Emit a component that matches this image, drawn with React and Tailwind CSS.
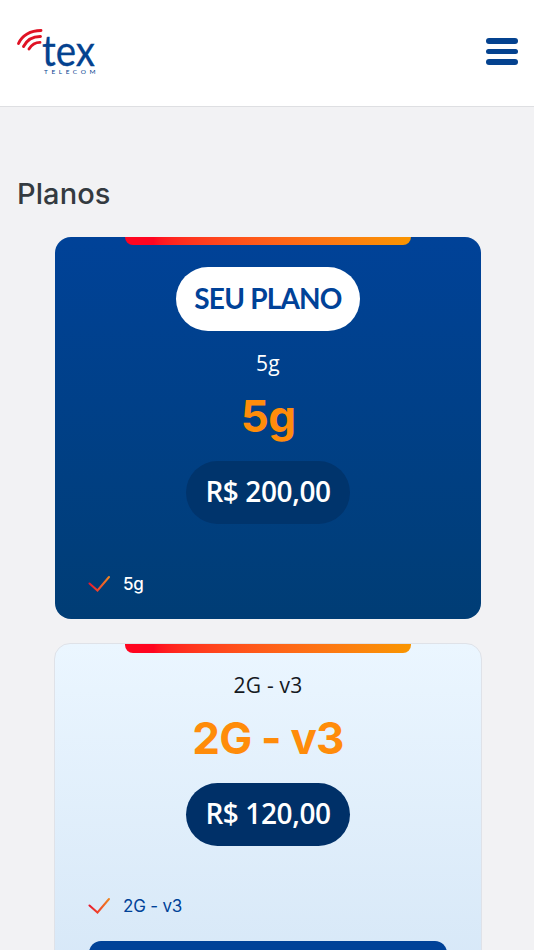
import { clsx } from "clsx";

const plans = [
  { name: "5g", price: "R$ 200,00", features: ["5g"], current: true },
  { name: "2G - v3", price: "R$ 120,00", features: ["2G - v3"], current: false },
];

const Logo = () => (
  <svg width="84" height="50" viewBox="0 0 84 50" role="img" aria-label="Tex Telecom" className="overflow-visible">
    <g fill="none" stroke="#e01224" strokeWidth="2.9" strokeLinecap="round">
      <path d="M2.500 15.500C6 7.500 14.500 2.500 25 2.500" />
      <path d="M7.500 18.500C11 11.800 17 8.400 24.500 8.500" />
      <path d="M13 21C15.500 17 19.500 14.400 24 14.400" />
    </g>
    <text
      x="26"
      y="37.500"
      textLength="53"
      lengthAdjust="spacingAndGlyphs"
      fill="#04428f"
      stroke="#04428f"
      strokeWidth="0.3"
      className="font-['Lato',sans-serif] text-[43px]"
    >
      tex
    </text>
    <text x="28" y="46" textLength="51.500" fill="#04428f" className="font-['Lato',sans-serif] text-[6.500px]">
      TELECOM
    </text>
  </svg>
);

const Header = () => (
  <header className="flex h-[107px] items-center justify-between border-b border-[#dedfe2] bg-white pr-4 pl-4">
    <Logo />
    <button type="button" aria-label="Menu" className="mb-[3px] flex w-8 flex-col gap-[5px]">
      <span className="h-[5.500px] rounded-full bg-[#04428f]" />
      <span className="h-[5.500px] rounded-full bg-[#04428f]" />
      <span className="h-[5.500px] rounded-full bg-[#04428f]" />
    </button>
  </header>
);

const CheckIcon = ({ id }) => (
  <svg width="22" height="18" viewBox="0 0 22 18" fill="none" className="shrink-0">
    <defs>
      <linearGradient id={id} x1="0" y1="0" x2="22" y2="0" gradientUnits="userSpaceOnUse">
        <stop stopColor="#e8112d" />
        <stop offset="0.5" stopColor="#f04a2a" />
        <stop offset="1" stopColor="#ee8a20" />
      </linearGradient>
    </defs>
    <path d="M1.500 8.500L9.500 15.500L21 2" stroke={`url(#${id})`} strokeWidth="2" strokeLinecap="round" />
  </svg>
);

const PlanCard = ({ plan, index }) => (
  <article
    className={clsx(
      "mx-auto flex flex-col items-center overflow-hidden rounded-2xl",
      plan.current
        ? "h-[382px] w-[426px] bg-linear-to-b from-[#004298] to-[#003d75]"
        : "h-[390px] w-[428px] border border-[#dfe2e8] bg-linear-to-b from-[#ebf6ff] to-[#d3e5f6]"
    )}
  >
    <div
      className={clsx(
        "w-[286px] shrink-0 rounded-b-lg bg-linear-to-r from-[#ff0520] from-10% to-[#f99500]",
        plan.current ? "h-2" : "h-[9px]"
      )}
    />
    {plan.current && (
      <div className="mt-[22px] flex h-16 w-[184px] shrink-0 items-center justify-center rounded-full bg-white pb-0.5 font-['Lato',sans-serif] text-[28px] font-bold tracking-[-0.8px] whitespace-nowrap text-[#004298]">
        SEU PLANO
      </div>
    )}
    <p
      className={clsx(
        "mt-[18px] h-7 shrink-0 font-['Open_Sans',sans-serif] text-[21px] leading-7 tracking-[0.2px]",
        plan.current ? "text-white" : "text-[#15191e]"
      )}
    >
      {plan.name}
    </p>
    <h2 className="mt-1.5 h-[66px] shrink-0 font-['Inter',sans-serif] text-[44px] leading-[66px] font-bold tracking-[-0.8px] whitespace-nowrap text-[#ff8c0a]">
      {plan.name}
    </h2>
    <div
      className={clsx(
        "mt-3 flex h-[63px] w-[164px] shrink-0 items-center justify-center rounded-full pb-1 font-['Open_Sans',sans-serif] text-[28px] font-semibold tracking-[-0.4px] whitespace-nowrap text-white",
        plan.current ? "bg-[#00346c]" : "bg-[#003068]"
      )}
    >
      {plan.price}
    </div>
    <ul
      className={clsx(
        "mt-12 w-full shrink-0 pl-[33px] font-['Inter',sans-serif] text-[17px] leading-6 tracking-[-0.2px]",
        plan.current ? "font-medium text-white" : "text-[#004298]"
      )}
    >
      {plan.features.map((feature) => (
        <li key={feature} className="flex items-center gap-[13px]">
          <CheckIcon id={`check-${index}`} />
          <span>{feature}</span>
        </li>
      ))}
    </ul>
    {!plan.current && (
      <div className="mt-[23px] h-12 w-[358px] shrink-0 rounded-xl bg-[#004298]" />
    )}
  </article>
);

const App = () => (
  <div className="h-[950px] w-full overflow-hidden bg-[#f2f2f4]">
    <Header />
    <main className="pt-[66px]">
      <h1 className="pl-[17px] font-['Inter',sans-serif] text-[29px] leading-[41px] font-medium tracking-[0.1px] text-[#343a40]">
        Planos
      </h1>
      <section className="mt-[23px] flex flex-col gap-6 pl-0.5">
        {plans.map((plan, index) => (
          <PlanCard key={plan.name} plan={plan} index={index} />
        ))}
      </section>
    </main>
  </div>
);

export default App;
